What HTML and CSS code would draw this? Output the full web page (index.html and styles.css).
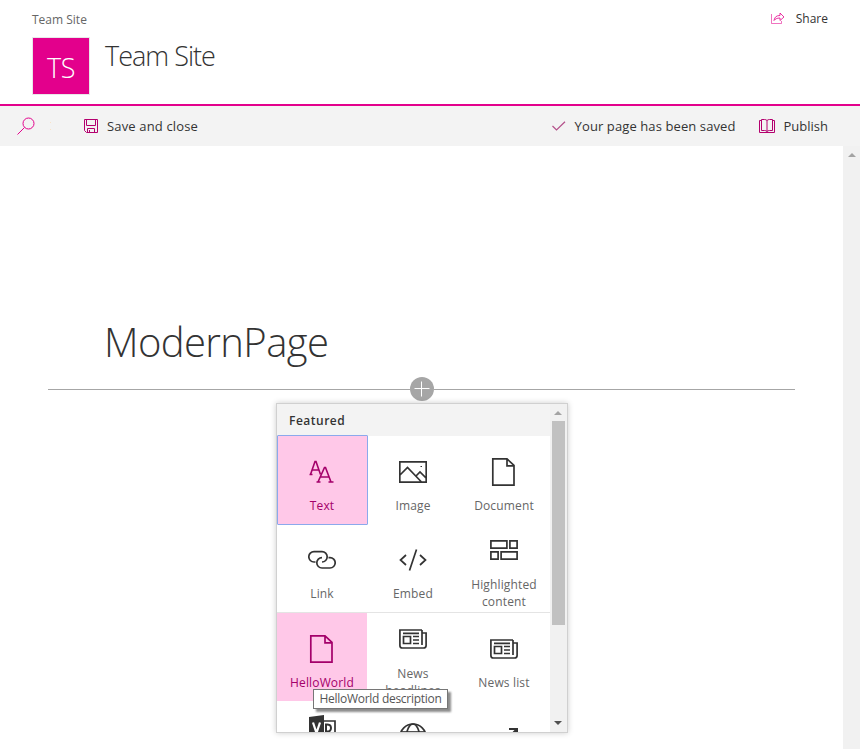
FILE: index.html
```html
<!DOCTYPE html>
<html lang="en">
<head>
<meta charset="utf-8">
<title>ModernPage</title>
<link rel="stylesheet" href="styles.css">
</head>
<body>
<header class="site">
  <div class="top"><a class="crumb">Team Site</a>
    <a class="share"><svg width="14" height="13" viewBox="0 0 14 13" fill="none" stroke="#e3008c"><path d="M.5 2v9.500h10V9" opacity=".55"/><path d="M3 8.500C3.500 5 5.500 3.500 9 3.500V1l4 4-4 3.500V6C6 6 4 7 3 8.500z" stroke-width=".8"/></svg><span>Share</span></a></div>
  <div class="brand"><div class="logo"><span>TS</span></div><h2><span>Team Site</span></h2></div>
</header>
<div class="bar">
  <svg class="search" width="18" height="18" viewBox="0 0 18 18" fill="none" stroke="#e3008c"><circle cx="11.500" cy="6.500" r="5.500"/><path d="M7.500 10.500L.5 17.500"/></svg>
  <i class="dots"></i>
  <svg class="save" width="14" height="14" viewBox="0 0 14 14" fill="none" stroke="#b4006e"><path d="M.5.5h13v13H2.500l-2-2zM2.500.5v6h9v-6M3.500 13V9.500h7V13M5.500 11v2"/></svg>
  <span class="t-save">Save and close</span>
  <svg class="check" width="14" height="10" viewBox="0 0 14 10" fill="none" stroke="#b4508a" stroke-width="1.200"><path d="M.5 5L4.500 9 13 .8"/></svg>
  <span class="t-saved">Your page has been saved</span>
  <svg class="book" width="16" height="14" viewBox="0 0 16 14" fill="none" stroke="#b4006e"><path d="M2.500 1.500H.5v12h15v-12h-2"/><path d="M8 1.500Q7 .5 5.500.5h-3v11h3Q7 11.500 8 12.500 9 11.500 10.500 11.500h3V.5h-3Q9 .5 8 1.500v11"/></svg>
  <span class="t-pub">Publish</span>
</div>
<div class="body">
<main>
  <h1><span>ModernPage</span></h1>
  <div class="divider"><i></i><svg width="24" height="24" viewBox="0 0 24 24"><circle cx="12" cy="12" r="12" fill="#a6a6a6"/><path d="M4.500 11.500h15M11.500 4.500v15" stroke="#fff"/></svg><i></i></div>
  <section class="picker">
    <div class="list">
      <h3>Featured</h3>
      <div class="grid">
        <div class="cell on focus"><svg width="28" height="28" viewBox="0 0 28 28" fill="none" stroke="#a4006a" stroke-width="1.600"><path d="M2.500 16.500L7 3.500h1l4.500 13M4 12h7M1.500 16.500h3"/><path d="M10 24L16.500 9.500h1L23 24M12.500 19h9M8.500 24h4M20.500 24h5"/></svg><b>Text</b></div>
        <div class="cell"><svg width="28" height="28" viewBox="0 0 28 28" fill="none" stroke="#333" stroke-width="1.700"><path d="M.8 3.800h26.400v20.400H.8zM1 17l7.500-7.500L22.500 24M17 18l4-4 6.500 6.500"/><path d="M21.500 8.500h1.500" stroke-width="1.200"/></svg><b>Image</b></div>
        <div class="cell"><svg width="28" height="28" viewBox="0 0 28 28" fill="none" stroke="#333" stroke-width="1.700"><path d="M2.800.9H17l7 6.500v19.700H2.800zM17 .9v7h7"/></svg><b>Document</b></div>
        <div class="cell"><svg width="28" height="28" viewBox="0 0 28 28" fill="none" stroke="#333" stroke-width="1.700"><path d="M7.500 16H6a5.200 5.200 0 0 1 0-10.400h8A5.200 5.200 0 0 1 14 16"/><path d="M20.500 11.600H22A5.200 5.200 0 0 1 22 22h-8a5.200 5.200 0 0 1 0-10.400"/></svg><b>Link</b></div>
        <div class="cell"><svg width="28" height="28" viewBox="0 0 28 28" fill="none" stroke="#333" stroke-width="1.700"><path d="M7 9l-5.500 5L7 19M21 9l5.500 5-5.500 5M17.500 3.500l-7 21"/></svg><b>Embed</b></div>
        <div class="cell two"><svg width="28" height="28" viewBox="0 0 28 28" fill="none" stroke="#333" stroke-width="1.700"><path d="M.9 4.900h16v7.200H.9zM19.900 4.900h7.200v7.200h-7.200zM.9 15.900h7.200v7.200H.9zM11.100 15.900h16v7.200h-16z"/></svg><b>Highlighted<br>content</b></div>
      </div>
      <div class="grid second">
        <div class="cell on"><svg width="28" height="28" viewBox="0 0 28 28" fill="none" stroke="#a4006a" stroke-width="1.700"><path d="M2.800.9H17l7 6.500v19.700H2.800zM17 .9v7h7"/></svg><b>HelloWorld</b></div>
        <div class="cell two"><svg width="28" height="28" viewBox="0 0 28 28" fill="none" stroke="#333" stroke-width="1.700"><path d="M23 5H.9v15.500q0 2.500 2.500 2.500h21q2.700 0 2.700-2.500V8H23M23 5v15M4.500 11.500h7v7h-7zM4 8.300h16M14 11.500h6M14 15h6M14 18.500h6"/></svg><b>News<br>headlines</b></div>
        <div class="cell"><svg width="28" height="28" viewBox="0 0 28 28" fill="none" stroke="#333" stroke-width="1.700"><path d="M23 5H.9v15.500q0 2.500 2.500 2.500h21q2.700 0 2.700-2.500V8H23M23 5v15M4.500 11.500h7v7h-7zM4 8.300h16M14 11.500h6M14 15h6M14 18.500h6"/></svg><b>News list</b></div>
        <div class="cell last"><svg width="28" height="28" viewBox="0 0 28 28" fill="none"><path d="M1 2l15-2v28L1 26z" fill="#333"/><path d="M5 7.500l3.500 10.500L12 7.500" stroke="#fff" stroke-width="2.200"/><path d="M16 6h11v18H16" stroke="#333" stroke-width="1.700"/><path d="M18 9.500q5-.5 5 3.500t-5 3.500z" stroke="#333" stroke-width="2"/></svg></div>
        <div class="cell last"><svg width="28" height="28" viewBox="0 0 28 28" fill="none" stroke="#333" stroke-width="1.700"><circle cx="14" cy="22" r="13"/><ellipse cx="14" cy="22" rx="6.500" ry="13"/><path d="M2 17h24"/></svg></div>
        <div class="cell last"><svg width="28" height="28" viewBox="0 0 28 28" fill="none" stroke="#333" stroke-width="2"><path d="M19 14h8v8M27 14L13 28"/></svg></div>
      </div>
    </div>
    <div class="scroll"><i class="up"></i><i class="thumb"></i><i class="down"></i></div>
  </section>
  <div class="tip"><span>HelloWorld description</span></div>
</main>
<aside class="pagescroll"><i class="up"></i></aside>
</div>
</body>
</html>
```
FILE: styles.css
```css
* { box-sizing: border-box; }
body { margin: 0; height: 749px; overflow: hidden; background: #fff; color: #333; font-family: "Open Sans", "Noto Sans", sans-serif; font-size: 13px; display: flex; flex-direction: column; }
svg { display: block; flex: none; }
h1, h2, h3 { margin: 0; }
.site { height: 106px; flex: none; border-bottom: 2px solid #e3008c; padding: 9px 32px 0; }
.top { display: flex; justify-content: space-between; height: 28px; font-size: 12px; line-height: 21px; }
.crumb { color: #666; }
.share { display: flex; line-height: 19px; }
.share svg { margin: 3px 11px 0 0; }
.brand { display: flex; }
.logo { width: 58px; height: 58px; border: 1px solid #e8e8e8; background: #e3008c; color: #fff; font-size: 27px; font-weight: 300; line-height: 59px; text-align: center; letter-spacing: -.5px; }
h2 { font-size: 27px; font-weight: 300; line-height: 38px; margin-left: 15px; letter-spacing: -1px; }
.bar { height: 40px; flex: none; background: #f3f3f3; display: flex; align-items: center; padding: 0 32px 0 17px; white-space: nowrap; }
.dots { width: 1px; height: 8px; margin: 0 33px 0 15px; border-top: 1px solid #fae3c8; border-bottom: 1px solid #fae3c8; }
.t-save { margin-left: 9px; letter-spacing: .15px; }
.check { margin-left: auto; }
.t-saved { margin: 0 23px 0 9px; letter-spacing: .1px; }
.t-pub { margin-left: 9px; }
.body { flex: 1; display: flex; min-height: 0; }
main { flex: 1; position: relative; padding: 167px 48px 0; }
.pagescroll { width: 17px; background: #f1f1f1; padding: 7px 4px 0 5px; }
.up { display: block; border: 4px solid transparent; border-top: 0; border-bottom: 4px solid #a3a3a3; width: 0; }
.down { display: block; border: 4px solid transparent; border-bottom: 0; border-top: 4px solid #505050; width: 0; }
h1 { margin-left: 56px; font-weight: 300; font-size: 40px; line-height: 58px; height: 64px; letter-spacing: -.6px; }
.divider { display: flex; align-items: center; height: 24px; }
.divider i { flex: 1; height: 1px; background: #a6a6a6; }
.picker { position: absolute; left: 276px; top: 257px; width: 292px; height: 330px; display: flex; border: 1px solid #d0d0d0; background: #fff; box-shadow: 0 0 6px rgba(0,0,0,.2); overflow: hidden; }
.list { width: 273px; overflow: hidden; }
h3 { height: 32px; background: #f3f3f3; padding-left: 12px; font-size: 12px; line-height: 34px; font-weight: 600; letter-spacing: .5px; }
.grid { display: grid; grid-template-columns: 91px 91px 91px; grid-auto-rows: 88px; }
.second { border-top: 1px solid #e4e4e4; }
.cell { display: flex; flex-direction: column; align-items: center; padding-top: 22px; width: 90px; overflow: hidden; }
.cell b { font-weight: 400; color: #666; font-size: 12px; line-height: 17px; margin-top: 11px; text-align: center; white-space: nowrap; letter-spacing: .15px; }
.cell.two { padding-top: 12px; }
.cell.two b { margin-top: 12px; }
.cell.on { background: #ffc8e8; }
.cell.on b { color: #a4006a; }
.cell.focus { width: 91px; height: 90px; margin-top: -1px; border: 1px solid #8ba9ec; border-radius: 1px; padding: 22px 1px 0 0; }
.cell.last { padding-top: 14px; }
.scroll { width: 17px; background: #f1f1f1; display: flex; flex-direction: column; align-items: center; padding: 7px 1px 7px 0; }
.thumb { width: 13px; height: 204px; background: #c1c1c1; margin: 6px 0 auto 1px; flex: none; }
.tip { position: absolute; left: 313px; top: 543px; width: 135px; height: 20px; border: 1px solid #767676; background: #fff; box-shadow: 3px 3px 2px rgba(0,0,0,.45); font-size: 12px; line-height: 18px; color: #555; text-align: center; white-space: nowrap; letter-spacing: -.28px; }
```
